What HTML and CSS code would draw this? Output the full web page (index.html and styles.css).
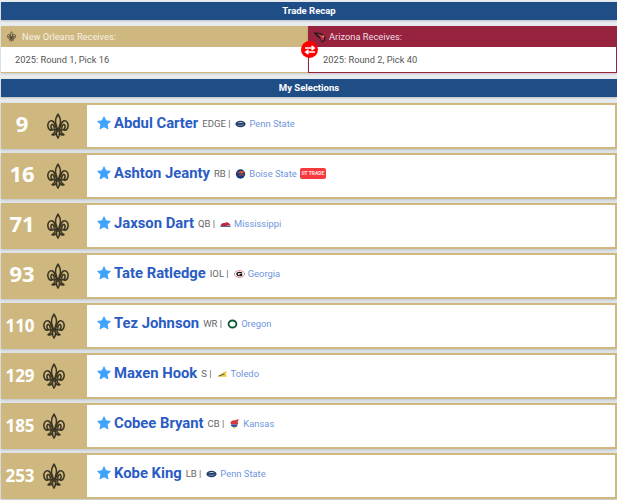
FILE: index.html
```html
<!DOCTYPE html>
<html lang="en">
<head>
<meta charset="utf-8">
<title>Draft Recap</title>
<link rel="stylesheet" href="styles.css">
</head>
<body>
<svg class="defs" width="0" height="0" aria-hidden="true">
  <symbol id="fleur" viewBox="0 0 24 28">
    <g fill="none" stroke="currentColor" stroke-width="1.700" stroke-linejoin="round">
      <path d="M12 1C9.800 4.500 9 7 9.300 10C9.700 13 11 14.500 11 17H13C13 14.500 14.300 13 14.700 10C15 7 14.200 4.500 12 1Z"/>
      <path d="M10.500 17.500C9 14 9 10 6 8.500C2.500 7.500 .5 11 1 14.500C1.500 18 4 19.500 6.500 18C4.500 17.500 3.500 14.500 5 12.500C6.500 11.500 8 14 8 17"/>
      <path d="M13.500 17.500C15 14 15 10 18 8.500C21.500 7.500 23.500 11 23 14.500C22.500 18 20 19.500 17.500 18C19.500 17.500 20.500 14.500 19 12.500C17.500 11.500 16 14 16 17"/>
      <path d="M12 27.200C10.500 25.500 10 23.500 10.500 19.500H13.500C14 23.500 13.500 25.500 12 27.200Z"/>
      <path d="M9 19.500C8 22 6.500 23 5.500 23.500C7.500 24.500 9.500 23.500 10.200 21.500"/>
      <path d="M15 19.500C16 22 17.500 23 18.500 23.500C16.500 24.500 14.500 23.500 13.800 21.500"/>
    </g>
    <path d="M7 17H17V19.300H7Z" fill="currentColor"/>
  </symbol>
  <symbol id="star" viewBox="0 0 24 24">
    <path d="M12 1.200L15.300 8.300L23 9.200L17.300 14.500L18.900 22.200L12 18.300L5.100 22.200L6.700 14.500L1 9.200L8.700 8.300Z" fill="#3ea2fb" stroke="#3ea2fb" stroke-width="1.500" stroke-linejoin="round"/>
  </symbol>
  <symbol id="psu" viewBox="0 0 12 8">
    <ellipse cx="6" cy="4" rx="5.500" ry="3.600" fill="#1e3a68"/>
    <path d="M2.500 3.200C4.500 1.800 7.500 1.800 9.800 3.300C7.500 2.800 5 2.800 2.500 3.200Z" fill="#fff"/>
    <path d="M3 5C5 5.600 7.500 5.600 9.200 4.800" stroke="#c9d2e2" stroke-width=".7" fill="none"/>
  </symbol>
</svg>

<main class="page">
  <h2 class="bar">Trade Recap</h2>

  <section class="recap">
    <div class="side side-saints">
      <div class="side-head">
        <svg class="side-logo"><use href="#fleur"/></svg>
        <span>New Orleans Receives:</span>
      </div>
      <div class="side-body">2025: Round 1, Pick 16</div>
    </div>
    <div class="side side-cards">
      <div class="side-head">
        <svg class="side-logo bird" viewBox="0 0 14 12">
          <path d="M.5 .5L9 2L13.500 5.500L13 10L9.500 12L7 7.500L3 4.500Z" fill="#2a1a1e"/>
          <path d="M4 2.500L9 3.500L12 6L11.500 9.500L9.500 10.300L7.500 5.800Z" fill="#c2304c"/>
          <path d="M9.500 4.300L12.500 4.800L11 6.500Z" fill="#f1c84a"/>
        </svg>
        <span>Arizona Receives:</span>
      </div>
      <div class="side-body">2025: Round 2, Pick 40</div>
    </div>
    <div class="swap">
      <svg viewBox="0 0 12 10" width="12" height="10">
        <path d="M1 3H9.500M7.500 .8L10.300 3L7.500 5.200M11 7H2.500M4.500 4.800L1.700 7L4.500 9.200" fill="none" stroke="#fff" stroke-width="1.500"/>
      </svg>
    </div>
  </section>

  <h2 class="bar">My Selections</h2>

  <ul class="picks">
    <li class="pick">
      <div class="pick-num"><span class="num">9</span><svg class="fleur"><use href="#fleur"/></svg></div>
      <div class="pick-info">
        <svg class="star"><use href="#star"/></svg>
        <a class="name">Abdul Carter</a>
        <span class="pos">EDGE |</span>
        <svg class="school-logo"><use href="#psu"/></svg>
        <a class="school">Penn State</a>
      </div>
    </li>
    <li class="pick">
      <div class="pick-num"><span class="num">16</span><svg class="fleur"><use href="#fleur"/></svg></div>
      <div class="pick-info">
        <svg class="star"><use href="#star"/></svg>
        <a class="name">Ashton Jeanty</a>
        <span class="pos">RB |</span>
        <svg class="school-logo" viewBox="0 0 12 12">
          <circle cx="6" cy="6" r="5.600" fill="#1b3a7c"/>
          <path d="M2 5.500C4 2 8 1.500 11 3.500C9.500 4 8.500 4.500 8 6C6 4.500 4 4.500 2 5.500Z" fill="#e4572a"/>
          <path d="M4 7.500C6 6.500 8 7.500 10 7" stroke="#e4572a" stroke-width="1" fill="none"/>
        </svg>
        <a class="school">Boise State</a>
        <span class="badge">IIT TRADE</span>
      </div>
    </li>
    <li class="pick">
      <div class="pick-num"><span class="num">71</span><svg class="fleur"><use href="#fleur"/></svg></div>
      <div class="pick-info">
        <svg class="star"><use href="#star"/></svg>
        <a class="name">Jaxson Dart</a>
        <span class="pos">QB |</span>
        <svg class="school-logo" viewBox="0 0 12 8">
          <path d="M.500 5.500C1 3.500 3 2.500 5 3L7 2C9 2 11 3.500 11.500 5.500H8C6.500 6.500 3 6.500 .500 5.500Z" fill="#c0293f"/>
          <path d="M.500 6H11.500V7H.500Z" fill="#22396b"/>
        </svg>
        <a class="school">Mississippi</a>
      </div>
    </li>
    <li class="pick">
      <div class="pick-num"><span class="num">93</span><svg class="fleur"><use href="#fleur"/></svg></div>
      <div class="pick-info">
        <svg class="star"><use href="#star"/></svg>
        <a class="name">Tate Ratledge</a>
        <span class="pos">IOL |</span>
        <svg class="school-logo" viewBox="0 0 12 8">
          <ellipse cx="6" cy="4" rx="5.500" ry="3.700" fill="#fff" stroke="#c8313f" stroke-width=".6"/>
          <path d="M8.800 2.200C6.500 .8 2.500 1.500 2.500 4C2.500 6.500 6.500 7.200 9 5.800V3.800H6V5H7.500C6 5.800 4.200 5.300 4.200 4C4.200 2.700 6.800 2.400 8.800 3.400Z" fill="#111"/>
        </svg>
        <a class="school">Georgia</a>
      </div>
    </li>
    <li class="pick">
      <div class="pick-num num-wide"><span class="num">110</span><svg class="fleur"><use href="#fleur"/></svg></div>
      <div class="pick-info">
        <svg class="star"><use href="#star"/></svg>
        <a class="name">Tez Johnson</a>
        <span class="pos">WR |</span>
        <svg class="school-logo" viewBox="0 0 12 10">
          <ellipse cx="6" cy="5" rx="4.300" ry="3.800" fill="none" stroke="#0f5a36" stroke-width="2"/>
        </svg>
        <a class="school">Oregon</a>
      </div>
    </li>
    <li class="pick">
      <div class="pick-num num-wide"><span class="num">129</span><svg class="fleur"><use href="#fleur"/></svg></div>
      <div class="pick-info">
        <svg class="star"><use href="#star"/></svg>
        <a class="name">Maxen Hook</a>
        <span class="pos">S |</span>
        <svg class="school-logo" viewBox="0 0 12 9">
          <path d="M1 7L7 2.500L11 1.500L9.500 4.500L11 7.500H2.500Z" fill="#f2c838"/>
          <path d="M1.500 6.800L8 4.500" stroke="#27406f" stroke-width=".9"/>
        </svg>
        <a class="school">Toledo</a>
      </div>
    </li>
    <li class="pick">
      <div class="pick-num num-wide"><span class="num">185</span><svg class="fleur"><use href="#fleur"/></svg></div>
      <div class="pick-info">
        <svg class="star"><use href="#star"/></svg>
        <a class="name">Cobee Bryant</a>
        <span class="pos">CB |</span>
        <svg class="school-logo" viewBox="0 0 12 11">
          <path d="M1.500 4.500C2 2 4.500 1 6.500 1.500L10.500 0L9.500 3.500C10.500 4.500 10.500 5.500 9.500 6H3.500C2.500 6 1.700 5.500 1.500 4.500Z" fill="#d33a3f"/>
          <path d="M2 6H9.500L8.500 8.500L4.500 9L2 7.500Z" fill="#2854a3"/>
          <path d="M4 9L6 11L8 9Z" fill="#f2c838"/>
        </svg>
        <a class="school">Kansas</a>
      </div>
    </li>
    <li class="pick">
      <div class="pick-num num-wide"><span class="num">253</span><svg class="fleur"><use href="#fleur"/></svg></div>
      <div class="pick-info">
        <svg class="star"><use href="#star"/></svg>
        <a class="name">Kobe King</a>
        <span class="pos">LB |</span>
        <svg class="school-logo"><use href="#psu"/></svg>
        <a class="school">Penn State</a>
      </div>
    </li>
  </ul>
</main>
</body>
</html>
```

FILE: styles.css
```css
* {
  box-sizing: border-box;
}

html,
body {
  margin: 0;
  height: 500px;
  overflow: hidden;
}

body {
  background: #e9ecef;
  font-family: Roboto, "Liberation Sans", sans-serif;
}

.defs {
  position: absolute;
}

.page {
  padding: 2px 0 0 1px;
}

.bar {
  margin: 0 0 6px;
  height: 18px;
  line-height: 17px;
  background: #1f4d85;
  color: #fff;
  font-size: 9.500px;
  font-weight: 700;
  text-align: center;
  box-shadow: 0 1px 2px rgba(0, 0, 0, .2);
}

.recap {
  position: relative;
  display: flex;
  height: 47px;
  margin-bottom: 6px;
}

.side {
  flex: 1 1 0;
  display: flex;
  flex-direction: column;
  border: 1px solid #cfb87f;
  border-top: 0;
  box-shadow: 0 1px 2px rgba(0, 0, 0, .15);
  background: #fff;
}

.side-saints {
  border-width: 0 0 1px;
}

.side-cards {
  border-color: #97233f;
  border-width: 0 1px 1px;
}

.side-head {
  height: 21px;
  display: flex;
  align-items: center;
  gap: 6px;
  padding-left: 6px;
  background: #cfb87f;
  color: #f6f0e2;
  font-size: 9.300px;
}

.side-cards .side-head {
  gap: 3px;
  padding-left: 4px;
  background: #97233f;
  color: #f2dde3;
}

.side-logo {
  width: 9px;
  height: 11px;
  color: #3a3423;
}

.bird {
  width: 13px;
  height: 12px;
}

.side-body {
  flex: 1;
  padding-left: 14px;
  line-height: 25px;
  font-size: 9.300px;
  color: #555;
}

.swap {
  position: absolute;
  left: 300px;
  top: 15px;
  width: 17px;
  height: 17px;
  display: flex;
  align-items: center;
  justify-content: center;
  border-radius: 50%;
  background: #f00;
}

.picks {
  list-style: none;
  margin: 0;
  padding: 0;
  display: flex;
  flex-direction: column;
  gap: 4px;
}

.pick {
  display: flex;
  height: 46px;
  background: #cfb87f;
  box-shadow: 0 1px 3px rgba(0, 0, 0, .2);
}

.pick-num {
  width: 85px;
  flex: none;
  display: flex;
  align-items: center;
  color: #fff;
}

.num {
  width: 42px;
  margin-top: -7px;
  text-align: center;
  font-size: 22px;
  font-weight: 700;
  font-family: "Open Sans", Roboto, sans-serif;
}

.num-wide .num {
  width: 38px;
  margin-top: -2px;
  font-size: 17px;
}

.fleur {
  width: 22px;
  height: 26px;
  margin-left: 4px;
  color: #3a3423;
}

.pick-info {
  flex: 1;
  display: flex;
  align-items: center;
  margin: 2px 2px 2px 1px;
  padding-left: 10px;
  padding-bottom: 7px;
  background: #fff;
}

.star {
  width: 14px;
  height: 14px;
  flex: none;
  margin-right: 3px;
}

.name {
  color: #2a5cc4;
  font-size: 14.800px;
  font-weight: 700;
  margin-right: 4px;
}

.pos {
  color: #666;
  font-size: 9.500px;
  padding-top: 2px;
  margin-right: 5px;
}

.school-logo {
  width: 11px;
  height: 10px;
  flex: none;
  margin-right: 3px;
  margin-top: 2px;
}

.school {
  color: #6f95de;
  font-size: 9.400px;
  padding-top: 2px;
}

.badge {
  margin-left: 3px;
  padding: 0 2px;
  height: 11px;
  line-height: 11px;
  border-radius: 2px;
  background: #f8383f;
  color: #ffe2e2;
  font-size: 5px;
  font-weight: 700;
  margin-top: 1px;
}
```
